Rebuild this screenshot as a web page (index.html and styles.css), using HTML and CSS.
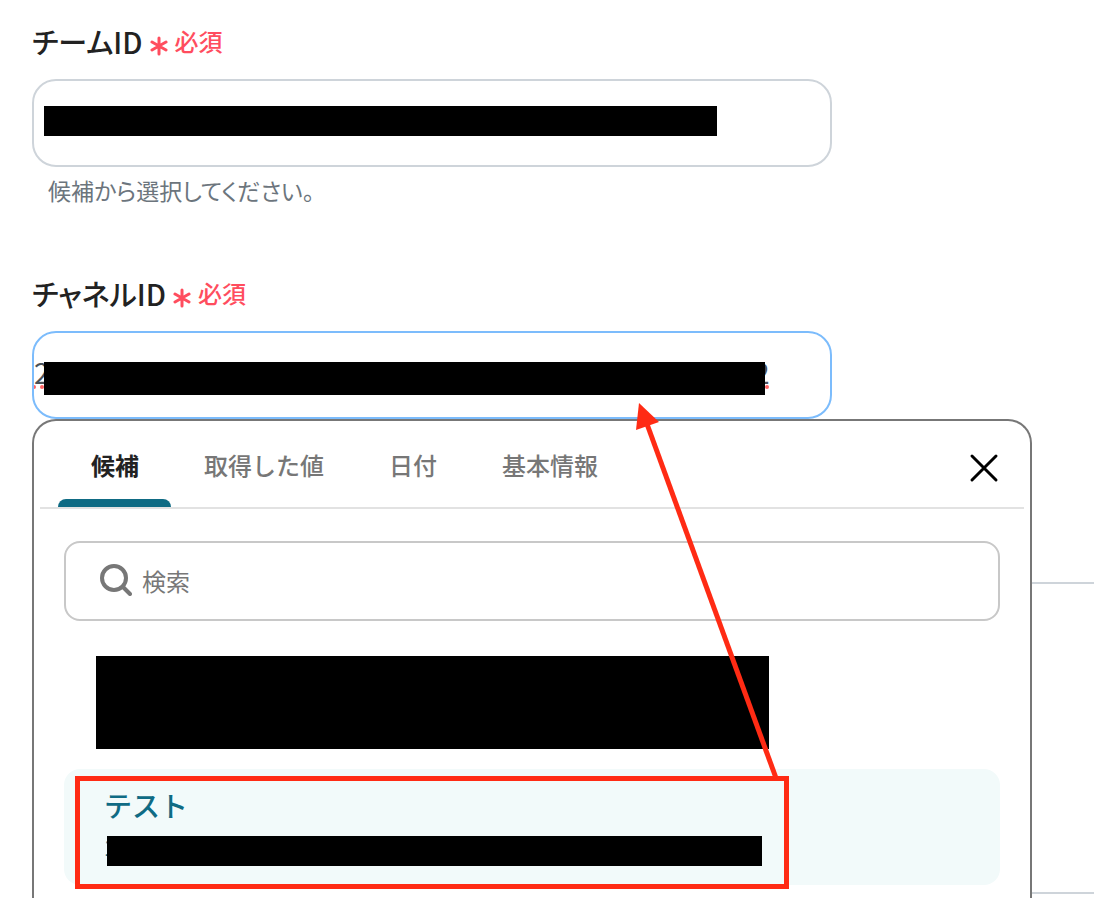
FILE: index.html
```html
<!DOCTYPE html>
<html lang="ja">
<head>
<meta charset="utf-8">
<meta name="viewport" content="width=device-width, initial-scale=1">
<title>チャネルID</title>
<link rel="stylesheet" href="styles.css">
</head>
<body>
<main class="page">
  <form class="form">
    <div class="field">
      <label class="field-label" for="team">
        <span class="field-name">チームID</span>
        <svg class="asterisk" viewBox="0 0 18 20" aria-hidden="true"><path d="M9 2V18M2 6L16 14M16 6L2 14"/></svg>
        <span class="required">必須</span>
      </label>
      <div class="control">
        <input class="input" id="team" type="text" aria-describedby="team-help">
        <span class="mask mask-team"></span>
      </div>
      <p class="help" id="team-help">候補から選択してください。</p>
    </div>

    <div class="field">
      <label class="field-label" for="channel">
        <span class="field-name">チャネルID</span>
        <svg class="asterisk" viewBox="0 0 18 20" aria-hidden="true"><path d="M9 2V18M2 6L16 14M16 6L2 14"/></svg>
        <span class="required">必須</span>
      </label>
      <div class="control">
        <input class="input input-active" id="channel" type="text" value="2" spellcheck="false">
        <span class="value-end">2</span>
        <svg class="spelling" width="735" height="4" aria-hidden="true"><circle cx="0" cy="2" r="2"/><circle cx="8" cy="2" r="2"/><circle cx="733" cy="2" r="2"/></svg>
        <span class="mask mask-channel"></span>

        <div class="popover">
          <div class="popover-head">
            <div class="tabs" role="tablist">
              <button class="tab tab-active" type="button" role="tab" aria-selected="true">候補</button>
              <button class="tab" type="button" role="tab" aria-selected="false">取得した値</button>
              <button class="tab" type="button" role="tab" aria-selected="false">日付</button>
              <button class="tab" type="button" role="tab" aria-selected="false">基本情報</button>
            </div>
            <button class="close" type="button" aria-label="閉じる">
              <svg viewBox="0 0 32 32" aria-hidden="true"><path d="M4 4L28 28M28 4L4 28"/></svg>
            </button>
          </div>
          <div class="popover-body">
            <label class="search">
              <svg class="search-icon" viewBox="0 0 32 32" aria-hidden="true"><circle cx="14" cy="14" r="12"/><path d="M23 23L30 30"/></svg>
              <input class="search-input" type="search" placeholder="検索" aria-label="検索">
            </label>
            <button class="option" type="button" aria-label="候補 1">
              <span class="option-mask"></span>
            </button>
            <button class="option option-selected" type="button">
              <span class="option-title">テスト</span>
              <span class="option-id">1<span class="mask mask-id"></span></span>
            </button>
          </div>
        </div>
      </div>
    </div>
  </form>
  <section class="panel"></section>
  <svg class="annotation" width="800" height="898" aria-hidden="true">
    <rect x="77.5" y="778.5" width="709" height="108"/>
    <path d="M776 778L647 424"/>
    <polygon points="639,403 659,422 636,430"/>
  </svg>
</main>
</body>
</html>
```
FILE: styles.css
```css
* {
  box-sizing: border-box;
}

body {
  margin: 0;
  background: #fff;
  color: #222;
  font-family: "Noto Sans CJK JP", sans-serif;
  font-size: 24px;
}

button,
input {
  font: inherit;
}

.page {
  position: relative;
  overflow: hidden;
  padding: 21px 0 4px;
}

.form {
  display: flex;
  flex-direction: column;
  gap: 66px;
  padding: 0 32px;
}

.field-label {
  display: flex;
  align-items: center;
  height: 40px;
  margin-bottom: 18px;
  line-height: 40px;
}

.field-name {
  font-size: 29px;
  font-weight: 500;
  font-feature-settings: "palt";
}

.asterisk {
  width: 18px;
  height: 20px;
  margin: 9px 7px 0;
  fill: none;
  stroke: #ff4d5e;
  stroke-width: 3;
  stroke-linecap: round;
}

.required {
  color: #ff4d5e;
  font-weight: 500;
}

.control {
  position: relative;
  max-width: 800px;
}

.input {
  display: block;
  width: 100%;
  height: 88px;
  padding: 0 0 6px;
  border: 2px solid #ced4da;
  border-radius: 24px;
  outline: 0;
  background: #fff;
  color: #495057;
  font-size: 28px;
}

.input-active {
  border-color: #7cbcfc;
}

.mask {
  position: absolute;
  background: #000;
}

.mask-team {
  left: 12px;
  top: 27px;
  width: 673px;
  height: 30px;
}

.mask-channel {
  left: 12px;
  top: 31px;
  width: 721px;
  height: 33px;
}

.value-end {
  position: absolute;
  left: 722px;
  top: 20px;
  color: #495057;
  font-size: 28px;
  line-height: 42px;
}

.spelling {
  position: absolute;
  left: 2px;
  top: 54px;
  fill: #ff6464;
}

.help {
  margin: 6px 0 0;
  padding-left: 16px;
  color: #6c757d;
  font-size: 23px;
  line-height: 34px;
  font-feature-settings: "palt";
}

.popover {
  position: absolute;
  z-index: 1;
  left: 0;
  top: 100%;
  width: 1000px;
  max-width: calc(100vw - 64px);
  border: 2px solid #777;
  border-bottom: 0;
  border-radius: 24px 24px 0 0;
  background: #fff;
}

.popover-head {
  display: flex;
  justify-content: space-between;
  height: 88px;
  margin: 0 6px;
  padding: 0 18px;
  border-bottom: 2px solid #e2e2e2;
}

.tabs {
  display: flex;
}

.tab {
  position: relative;
  padding: 2px 32px 0 33px;
  border: 0;
  background: none;
  color: #777;
  font-weight: 500;
  line-height: 36px;
}

.tab-active {
  color: #222;
  font-weight: 700;
}

.tab-active::after {
  content: "";
  position: absolute;
  left: 0;
  right: 0;
  bottom: 0;
  height: 8px;
  border-radius: 8px 8px 0 0;
  background: #0f6b84;
}

.close {
  padding: 8px 6px 0;
  border: 0;
  background: none;
}

.close svg {
  display: block;
  width: 32px;
  height: 32px;
  stroke: #000;
  stroke-width: 3;
  stroke-linecap: round;
}

.popover-body {
  display: flex;
  flex-direction: column;
  gap: 16px;
  padding: 32px 30px 14px;
}

.search {
  display: flex;
  align-items: center;
  gap: 10px;
  height: 80px;
  padding: 0 34px 2px;
  border: 2px solid #c8c8c8;
  border-radius: 16px;
}

.search-icon {
  width: 32px;
  height: 32px;
  flex: none;
  fill: none;
  stroke: #777;
  stroke-width: 4;
  stroke-linecap: round;
}

.search-input {
  flex: 1;
  min-width: 0;
  padding: 0;
  border: 0;
  outline: 0;
  background: none;
}

.search-input::placeholder {
  color: #777;
}

.option {
  display: flex;
  flex-direction: column;
  justify-content: center;
  height: 116px;
  padding: 0 40px;
  border: 0;
  border-radius: 16px;
  background: none;
  color: #0f6b84;
  text-align: left;
}

.option-mask {
  width: 673px;
  height: 93px;
  margin: 15px 0 0 -8px;
  background: #000;
}

.option-selected {
  background: #f2fafa;
}

.option-title {
  font-size: 28px;
  font-weight: 500;
  line-height: 42px;
}

.option-id {
  position: relative;
  font-family: "Liberation Sans", sans-serif;
  line-height: 44px;
}

.mask-id {
  left: 3px;
  top: 10px;
  width: 655px;
  height: 30px;
}

.panel {
  height: 312px;
  margin: 163px 0 0 40px;
  border: solid #ced4da;
  border-width: 2px 0;
}

.annotation {
  position: absolute;
  z-index: 2;
  left: 0;
  top: 0;
  fill: none;
  stroke: #ff2b14;
  stroke-width: 5;
  pointer-events: none;
}

.annotation polygon {
  fill: #ff2b14;
  stroke: none;
}
```
